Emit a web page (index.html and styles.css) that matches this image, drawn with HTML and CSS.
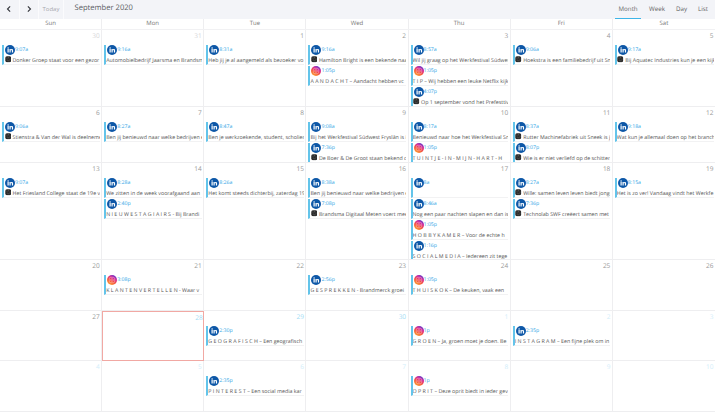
FILE: index.html
```html
<!DOCTYPE html>
<html lang="nl">
<head>
<meta charset="utf-8">
<title>September 2020</title>
<link rel="stylesheet" href="styles.css">
</head>
<body>
<svg class="defs" aria-hidden="true">
  <defs>
    <linearGradient id="ig" x1="0.1" y1="1" x2="0.7" y2="0">
      <stop offset="0" stop-color="#fdb32b"/>
      <stop offset="0.45" stop-color="#f5503f"/>
      <stop offset="0.75" stop-color="#d42a9a"/>
      <stop offset="1" stop-color="#5a35c8"/>
    </linearGradient>
    <symbol id="li" viewBox="0 0 20 20">
      <circle cx="10" cy="10" r="10" fill="#0d57a7"/>
      <rect x="5" y="8" width="2.4" height="7" fill="#fff"/>
      <circle cx="6.2" cy="5.9" r="1.4" fill="#fff"/>
      <path d="M9 8h2.3v1c.5-.8 1.3-1.2 2.3-1.2 1.9 0 2.6 1.2 2.6 3.2v4h-2.4v-3.6c0-1-.3-1.6-1.2-1.6s-1.3.7-1.3 1.6V15H9z" fill="#fff"/>
    </symbol>
    <symbol id="in" viewBox="0 0 20 20">
      <circle cx="10" cy="10" r="10" fill="url(#ig)"/>
      <rect x="4.6" y="4.6" width="10.8" height="10.8" rx="3" fill="none" stroke="#fff" stroke-opacity=".55" stroke-width="1.2"/>
      <circle cx="10" cy="10" r="2.6" fill="none" stroke="#fff" stroke-opacity=".55" stroke-width="1.2"/>
    </symbol>
    <symbol id="av" viewBox="0 0 12 12">
      <rect x="0.5" y="0.5" width="11" height="11" rx="3" fill="#2a2a2a"/>
      <path d="M3 3h1.5v1.5H3zM6 2.500h1.500V4H6zM8.500 5H10v1.500H8.500zM3.500 7H5v1.500H3.500zM6.500 8H8v1.500H6.500z" fill="#6d6d6d"/>
    </symbol>
  </defs>
</svg>

<header class="toolbar">
  <nav class="tools-left">
    <button class="tool tool-arrow" type="button"><svg class="chev" viewBox="0 0 8 10"><path d="M5.500 1.500 2 5l3.500 3.500"/></svg></button>
    <button class="tool tool-arrow" type="button"><svg class="chev" viewBox="0 0 8 10"><path d="M2.500 1.500 6 5 2.500 8.500"/></svg></button>
    <button class="tool tool-today" type="button">Today</button>
    <h1 class="title">September 2020</h1>
  </nav>
  <nav class="views">
    <a class="view view-active">Month</a>
    <a class="view view-week">Week</a>
    <a class="view view-day">Day</a>
    <a class="view view-list">List</a>
  </nav>
</header>

<div class="days">
  <div class="day">Sun</div><div class="day">Mon</div><div class="day">Tue</div><div class="day">Wed</div><div class="day">Thu</div><div class="day">Fri</div><div class="day">Sat</div>
</div>

<main class="month">
  <!-- week 1 -->
  <section class="cell other-past"><div class="num">30</div>
    <article class="ev"><div class="top"><svg class="ic"><use href="#li"/></svg><span class="time">9:07a</span></div><p class="txt"><svg class="av"><use href="#av"/></svg>Donker Groep staat voor een gezor</p></article>
  </section>
  <section class="cell other-past"><div class="num">31</div>
    <article class="ev"><div class="top"><svg class="ic"><use href="#li"/></svg><span class="time">9:16a</span></div><p class="txt">Automobielbedrijf Jaarsma en Brandsm</p></article>
  </section>
  <section class="cell"><div class="num">1</div>
    <article class="ev"><div class="top"><svg class="ic"><use href="#li"/></svg><span class="time">8:31a</span></div><p class="txt">Heb jij je al aangemeld als bezoeker vo</p></article>
  </section>
  <section class="cell"><div class="num">2</div>
    <article class="ev"><div class="top"><svg class="ic"><use href="#li"/></svg><span class="time">9:16a</span></div><p class="txt"><svg class="av"><use href="#av"/></svg>Hamilton Bright is een bekende naa</p></article>
    <article class="ev"><div class="top"><svg class="ic"><use href="#in"/></svg><span class="time">1:05p</span></div><p class="txt">A A N D A C H T – Aandacht hebben vc</p></article>
  </section>
  <section class="cell"><div class="num">3</div>
    <article class="ev"><div class="top"><svg class="ic"><use href="#li"/></svg><span class="time">8:57a</span></div><p class="txt">Wil jij graag op het Werkfestival Súdwes</p></article>
    <article class="ev"><div class="top"><svg class="ic"><use href="#in"/></svg><span class="time">1:05p</span></div><p class="txt">T I P – Wij hebben een leuke Netflix kijk</p></article>
    <article class="ev"><div class="top"><svg class="ic"><use href="#li"/></svg><span class="time">4:07p</span></div><p class="txt"><svg class="av"><use href="#av"/></svg>Op 1 september vond het Prefesttiva</p></article>
  </section>
  <section class="cell"><div class="num">4</div>
    <article class="ev"><div class="top"><svg class="ic"><use href="#li"/></svg><span class="time">9:06a</span></div><p class="txt"><svg class="av"><use href="#av"/></svg>Hoekstra is een familiebedrijf uit Sn</p></article>
  </section>
  <section class="cell"><div class="num">5</div>
    <article class="ev"><div class="top"><svg class="ic"><use href="#li"/></svg><span class="time">9:17a</span></div><p class="txt"><svg class="av"><use href="#av"/></svg>Bij Aquatec Industries kun je een kijk</p></article>
  </section>
  <!-- week 2 -->
  <section class="cell"><div class="num">6</div>
    <article class="ev"><div class="top"><svg class="ic"><use href="#li"/></svg><span class="time">9:06a</span></div><p class="txt"><svg class="av"><use href="#av"/></svg>Stienstra &amp; Van der Wal is deelneme</p></article>
  </section>
  <section class="cell"><div class="num">7</div>
    <article class="ev"><div class="top"><svg class="ic"><use href="#li"/></svg><span class="time">8:27a</span></div><p class="txt">Ben jij benieuwd naar welke bedrijven e</p></article>
  </section>
  <section class="cell"><div class="num">8</div>
    <article class="ev"><div class="top"><svg class="ic"><use href="#li"/></svg><span class="time">8:47a</span></div><p class="txt">Ben je werkzoekende, student, scholier</p></article>
  </section>
  <section class="cell"><div class="num">9</div>
    <article class="ev"><div class="top"><svg class="ic"><use href="#li"/></svg><span class="time">9:08a</span></div><p class="txt">Bij het Werkfestival Súdwest Fryslân is i</p></article>
    <article class="ev"><div class="top"><svg class="ic"><use href="#li"/></svg><span class="time">7:36p</span></div><p class="txt"><svg class="av"><use href="#av"/></svg>De Boer &amp; De Groot staan bekend c</p></article>
  </section>
  <section class="cell"><div class="num">10</div>
    <article class="ev"><div class="top"><svg class="ic"><use href="#li"/></svg><span class="time">8:17a</span></div><p class="txt">Benieuwd naar hoe het Werkfestival Sn</p></article>
    <article class="ev"><div class="top"><svg class="ic"><use href="#in"/></svg><span class="time">1:05p</span></div><p class="txt">T U I N T J E - I N - M I J N - H A R T - H</p></article>
  </section>
  <section class="cell"><div class="num">11</div>
    <article class="ev"><div class="top"><svg class="ic"><use href="#li"/></svg><span class="time">8:37a</span></div><p class="txt"><svg class="av"><use href="#av"/></svg>Rutter Machinefabriek uit Sneek is j</p></article>
    <article class="ev"><div class="top"><svg class="ic"><use href="#li"/></svg><span class="time">8:07p</span></div><p class="txt"><svg class="av"><use href="#av"/></svg>Wie is er niet verliefd op de schitter</p></article>
  </section>
  <section class="cell"><div class="num">12</div>
    <article class="ev"><div class="top"><svg class="ic"><use href="#li"/></svg><span class="time">9:18a</span></div><p class="txt">Wat kun je allemaal doen op het branch</p></article>
  </section>
  <!-- week 3 -->
  <section class="cell"><div class="num">13</div>
    <article class="ev"><div class="top"><svg class="ic"><use href="#li"/></svg><span class="time">9:07a</span></div><p class="txt"><svg class="av"><use href="#av"/></svg>Het Friesland College staat de 19e v</p></article>
  </section>
  <section class="cell"><div class="num">14</div>
    <article class="ev"><div class="top"><svg class="ic"><use href="#li"/></svg><span class="time">8:28a</span></div><p class="txt">We zitten in de week voorafgaand aan</p></article>
    <article class="ev"><div class="top"><svg class="ic"><use href="#li"/></svg><span class="time">2:40p</span></div><p class="txt">N I E U W E S T A G I A I R S - Bij Brandi</p></article>
  </section>
  <section class="cell"><div class="num">15</div>
    <article class="ev"><div class="top"><svg class="ic"><use href="#li"/></svg><span class="time">8:26a</span></div><p class="txt">Het komt steeds dichterbij, zaterdag 19</p></article>
  </section>
  <section class="cell"><div class="num">16</div>
    <article class="ev"><div class="top"><svg class="ic"><use href="#li"/></svg><span class="time">8:38a</span></div><p class="txt">Ben jij benieuwd naar welke bedrijven e</p></article>
    <article class="ev"><div class="top"><svg class="ic"><use href="#li"/></svg><span class="time">7:08p</span></div><p class="txt"><svg class="av"><use href="#av"/></svg>Brandsma Digitaal Meten voert mee</p></article>
  </section>
  <section class="cell"><div class="num">17</div>
    <article class="ev"><div class="top"><svg class="ic"><use href="#li"/></svg><span class="time">8a</span></div><p class="txt">&nbsp;</p></article>
    <article class="ev"><div class="top"><svg class="ic"><use href="#li"/></svg><span class="time">8:46a</span></div><p class="txt">Nog een paar nachten slapen en dan is</p></article>
    <article class="ev"><div class="top"><svg class="ic"><use href="#in"/></svg><span class="time">1:05p</span></div><p class="txt">H O B B Y K A M E R – Voor de echte h</p></article>
    <article class="ev"><div class="top"><svg class="ic"><use href="#li"/></svg><span class="time">1:16p</span></div><p class="txt">S O C I A L M E D I A – Iedereen zit tege</p></article>
  </section>
  <section class="cell"><div class="num">18</div>
    <article class="ev"><div class="top"><svg class="ic"><use href="#li"/></svg><span class="time">8:27a</span></div><p class="txt"><svg class="av"><use href="#av"/></svg>Wille: samen leven leven biedt jonge</p></article>
    <article class="ev"><div class="top"><svg class="ic"><use href="#li"/></svg><span class="time">7:36p</span></div><p class="txt"><svg class="av"><use href="#av"/></svg>Technolab SWF creëert samen met</p></article>
  </section>
  <section class="cell"><div class="num">19</div>
    <article class="ev"><div class="top"><svg class="ic"><use href="#li"/></svg><span class="time">8:15a</span></div><p class="txt">Het is zo ver! Vandaag vindt het Werkfe</p></article>
  </section>
  <!-- week 4 -->
  <section class="cell"><div class="num">20</div></section>
  <section class="cell"><div class="num">21</div>
    <article class="ev"><div class="top"><svg class="ic"><use href="#in"/></svg><span class="time">3:08p</span></div><p class="txt">K L A N T E N V E R T E L L E N - Waar v</p></article>
  </section>
  <section class="cell"><div class="num">22</div></section>
  <section class="cell"><div class="num">23</div>
    <article class="ev"><div class="top"><svg class="ic"><use href="#li"/></svg><span class="time">2:56p</span></div><p class="txt">G E S P R E K K E N - Brandmerck groei</p></article>
  </section>
  <section class="cell"><div class="num">24</div>
    <article class="ev"><div class="top"><svg class="ic"><use href="#in"/></svg><span class="time">1:05p</span></div><p class="txt">T H U I S K O K – De keuken, vaak een</p></article>
  </section>
  <section class="cell"><div class="num">25</div></section>
  <section class="cell"><div class="num">26</div></section>
  <!-- week 5 -->
  <section class="cell"><div class="num">27</div></section>
  <section class="cell cell-today future"><div class="num">28</div></section>
  <section class="cell future"><div class="num">29</div>
    <article class="ev"><div class="top"><svg class="ic"><use href="#li"/></svg><span class="time">2:30p</span></div><p class="txt">G E O G R A F I S C H – Een geografisch</p></article>
  </section>
  <section class="cell future"><div class="num">30</div></section>
  <section class="cell other-next"><div class="num">1</div>
    <article class="ev"><div class="top"><svg class="ic"><use href="#in"/></svg><span class="time">1p</span></div><p class="txt">G R O E N – Ja, groen moet je doen. Be</p></article>
  </section>
  <section class="cell other-next"><div class="num">2</div>
    <article class="ev"><div class="top"><svg class="ic"><use href="#li"/></svg><span class="time">2:35p</span></div><p class="txt">I N S T A G R A M – Een fijne plek om in</p></article>
  </section>
  <section class="cell other-next"><div class="num">3</div></section>
  <!-- week 6 -->
  <section class="cell other-next"><div class="num">4</div></section>
  <section class="cell other-next"><div class="num">5</div></section>
  <section class="cell other-next"><div class="num">6</div>
    <article class="ev"><div class="top"><svg class="ic"><use href="#li"/></svg><span class="time">2:35p</span></div><p class="txt">P I N T E R E S T – Een social media kar</p></article>
  </section>
  <section class="cell other-next"><div class="num">7</div></section>
  <section class="cell other-next"><div class="num">8</div>
    <article class="ev"><div class="top"><svg class="ic"><use href="#in"/></svg><span class="time">1p</span></div><p class="txt">O P R I T – Deze oprit biedt in ieder gev</p></article>
  </section>
  <section class="cell other-next"><div class="num">9</div></section>
  <section class="cell other-next"><div class="num">10</div></section>
</main>
</body>
</html>
```

FILE: styles.css
```css
* { box-sizing: border-box; }
html, body { margin: 0; padding: 0; background: #fff; }
body { width: 715px; height: 414px; overflow: hidden; font-family: "Open Sans", "Noto Sans", sans-serif; color: #555; text-rendering: geometricPrecision; }
.defs { width: 0; height: 0; display: block; overflow: hidden; }

.toolbar { height: 18.5px; background: #f3f4f8; display: flex; justify-content: space-between; align-items: stretch; }
.tools-left { display: flex; align-items: stretch; }
.tool { border: 0; padding: 0; margin: 0; background: transparent; border-right: 1px solid #fbfbfd; font: inherit; display: flex; align-items: center; justify-content: center; }
.tool-arrow { width: 19.5px; }
.tool-today { width: 25px; font-size: 6px; color: #a8a8ae; }
.chev { width: 6px; height: 8px; fill: none; stroke: #33353b; stroke-width: 1.500; }
.title { margin: 0 0 0 10.500px; font-size: 7.600px; font-weight: 400; color: #5a5c63; align-self: center; line-height: 1; }
.views { display: flex; align-items: stretch; font-size: 6.200px; color: #666; }
.view { display: flex; align-items: center; padding-bottom: 1px; border-bottom: 1px solid transparent; }
.view-active { width: 26px; justify-content: center; border-bottom: 1.500px solid #3db5e8; margin-right: 8px; }
.view-week { margin-right: 11px; }
.view-day { margin-right: 11px; }
.view-list { margin-right: 7px; }

.days { display: grid; grid-template-columns: repeat(7, 1fr); height: 11px; margin-top: .5px; border-bottom: 1.500px solid #f1f1f3; }
.day { text-align: center; font-size: 6px; line-height: 9.500px; color: #777; border-right: 1px solid #eeeef0; }
.day:last-child { border-right: 0; }

.month { display: grid; grid-template-columns: repeat(7, 1fr); grid-template-rows: 77px 56px 97px 51px 50px 51px; }
.cell { min-width: 0; border-right: 1px solid #eeeef0; border-bottom: 1.500px solid #eeeef0; padding: 0 1.500px 0 2px; display: flex; flex-direction: column; gap: 1.500px; overflow: hidden; }
.cell:nth-child(7n) { border-right: 0; }
.num { height: 13.500px; flex: none; text-align: right; font-size: 6.500px; line-height: 12px; color: #999; }
.other-past .num { color: #d6d6d8; }
.future .num { color: #a3dcf5; }
.other-next .num { color: #d3eefa; }
.cell-today { border: 1px solid #f1a8a3; padding: 0 .5px 0 1px; }

.ev { flex: none; height: 19.500px; border-left: 2px solid #63c4ea; border-bottom: 1px solid #f2f2f3; overflow: hidden; }
.top { height: 10.500px; display: flex; align-items: flex-start; padding-left: 1px; }
.ic { width: 10px; height: 10px; flex: none; }
.time { font-size: 5.200px; line-height: 8px; color: #34a6e6; }
.txt { margin: 0; font-size: 5.300px; line-height: 8px; white-space: nowrap; overflow: hidden; color: #555; display: flex; align-items: center; }
.av { width: 6.500px; height: 6.500px; flex: none; margin: 0 1.500px 0 .5px; }
```
